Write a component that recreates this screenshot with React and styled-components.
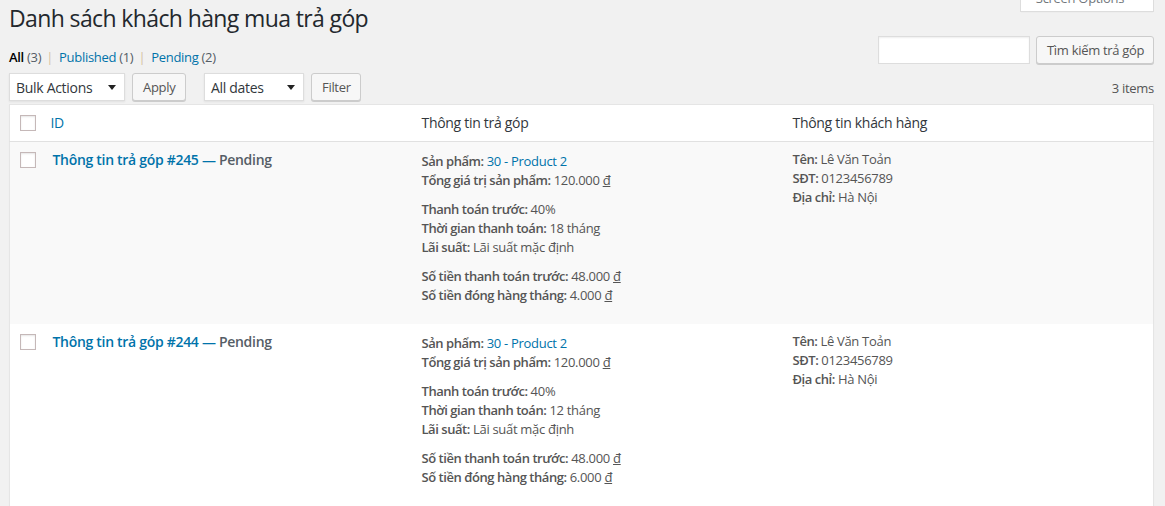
import React from "react";
import styled, { createGlobalStyle } from "styled-components";

const Global = createGlobalStyle`
  html, body { margin: 0; padding: 0; background: #f1f1f1; }
  body {
    font-family: "Open Sans", "Noto Sans", sans-serif;
    font-size: 13px;
    color: #444;
    letter-spacing: -0.3px;
    overflow: hidden;
  }
  * { box-sizing: border-box; }
`;

const Page = styled.div`
  position: relative;
  padding: 0 11px 0 9px;
  width: 1165px;
  height: 506px;
  overflow: hidden;
`;

const ScreenTab = styled.div`
  position: absolute;
  top: -16px;
  right: 11px;
  width: 134px;
  height: 28px;
  background: #fff;
  border: 1px solid #ddd;
  border-top: none;
  box-shadow: 0 1px 1px -1px rgba(0, 0, 0, 0.1);
  color: #72777c;
  font-size: 13px;
  line-height: 28px;
  display: flex;
  align-items: center;
  justify-content: center;
  gap: 6px;
`;

const Title = styled.h1`
  margin: 0;
  padding: 4px 0 0;
  font-size: 23px;
  font-weight: 400;
  line-height: 29px;
  letter-spacing: -0.62px;
  color: #23282d;
`;

const TopRow = styled.div`
  display: flex;
  justify-content: space-between;
  align-items: flex-start;
  height: 31px;
`;

const Subsub = styled.ul`
  list-style: none;
  margin: 15px 0 0;
  padding: 0;
  display: flex;
  line-height: 19px;
  font-size: 13px;
  color: #666;
`;

const SubItem = styled.li`
  display: flex;
  white-space: pre;
`;

const SubLink = styled.a`
  color: ${(p) => (p.$current ? "#000" : "#0073aa")};
  font-weight: ${(p) => (p.$current ? 600 : 400)};
  text-decoration: none;
`;

const Count = styled.span`
  color: #555d66;
  font-weight: 400;
`;

const Sep = styled.span`
  color: #d6c2a2;
  padding: 0 6px 0 5px;
`;

const SearchBox = styled.div`
  display: flex;
  gap: 6px;
  margin-top: 3px;
`;

const SearchInput = styled.div`
  width: 152px;
  height: 28px;
  background: #fff;
  border: 1px solid #ddd;
  box-shadow: inset 0 1px 2px rgba(0, 0, 0, 0.07);
`;

const Button = styled.button`
  height: 28px;
  padding: 0 10px 1px;
  margin: 0;
  font-family: inherit;
  font-size: 13px;
  letter-spacing: -0.3px;
  line-height: 26px;
  color: #555;
  background: #f7f7f7;
  border: 1px solid #ccc;
  border-radius: 3px;
  box-shadow: 0 1px 0 #ccc;
  white-space: nowrap;
  width: ${(p) => p.$w || "auto"};
`;

const TableNav = styled.div`
  display: flex;
  align-items: center;
  margin-top: 9px;
  height: 28px;
`;

const Actions = styled.div`
  display: flex;
  align-items: center;
  gap: 7px;
  margin-right: ${(p) => p.$mr || "0"};
`;

const Select = styled.div`
  width: ${(p) => p.$w};
  height: 28px;
  background: #fff;
  border: 1px solid #ddd;
  box-shadow: 0 1px 2px rgba(0, 0, 0, 0.07);
  color: #32373c;
  font-size: 14px;
  line-height: 26px;
  padding: 1px 8px 0 6px;
  display: flex;
  align-items: center;
  justify-content: space-between;
`;

const Items = styled.div`
  margin-left: auto;
  color: #555;
  font-size: 13px;
  padding-top: 1px;
`;

const Table = styled.table`
  margin-top: 3px;
  width: 1145px;
  border-collapse: collapse;
  border-spacing: 0;
  table-layout: fixed;
  background: #fff;
  border: 1px solid #e5e5e5;
  box-shadow: 0 1px 1px rgba(0, 0, 0, 0.04);
`;

const Th = styled.th`
  text-align: left;
  font-weight: 400;
  font-size: 14px;
  color: #32373c;
  line-height: 19px;
  padding: 8px 10px 9px;
  border-bottom: 1px solid #e1e1e1;
  vertical-align: middle;
`;

const HeadLink = styled.a`
  color: #0073aa;
  text-decoration: none;
`;

const Tr = styled.tr`
  background: ${(p) => (p.$alt ? "#f9f9f9" : "#fff")};
`;

const Td = styled.td`
  vertical-align: top;
  padding: ${(p) => p.$pad || "8px 10px"};
  color: #555;
  font-size: 13px;
  line-height: 19px;
`;

const CheckCell = styled.td`
  vertical-align: top;
  padding: 10px 0 0 10px;
`;

const CheckHead = styled.th`
  padding: 0 0 0 10px;
  vertical-align: middle;
  border-bottom: 1px solid #e1e1e1;
`;

const Checkbox = styled.span`
  display: block;
  width: 16px;
  height: 16px;
  background: #fff;
  border: 1px solid #c5b8b8;
  box-shadow: inset 0 1px 2px rgba(0, 0, 0, 0.1);
`;

const RowTitle = styled.a`
  display: block;
  margin-left: 2px;
  font-size: 14px;
  font-weight: 600;
  letter-spacing: -0.3px;
  color: #0073aa;
  text-decoration: none;
  line-height: 20px;
`;

const PostState = styled.span`
  color: #555d66;
`;

const Para = styled.p`
  margin: 0 0 10px;
`;

const Line = styled.div``;

const Label = styled.span`
  font-weight: 600;
  letter-spacing: -0.45px;
  color: #555;
`;

const ValueLink = styled.a`
  color: #0073aa;
  text-decoration: none;
`;

const Arrow = () => (
  <svg width="8" height="5" viewBox="0 0 8 5">
    <path d="M0 0 L8 0 L4 5 Z" fill="#222" />
  </svg>
);

const rows = [
  { id: 245, months: 18, monthly: "4.000", alt: true },
  { id: 244, months: 12, monthly: "6.000", alt: false },
];

export default function App() {
  return (
    <>
      <Global />
      <Page>
        <ScreenTab>
          Screen Options
          <svg width="8" height="5" viewBox="0 0 8 5">
            <path d="M0 0 L8 0 L4 5 Z" fill="#a0a5aa" />
          </svg>
        </ScreenTab>
        <Title>Danh sách khách hàng mua trả góp</Title>
        <TopRow>
          <Subsub>
            <SubItem>
              <SubLink $current>All</SubLink>
              <Count> (3)</Count>
              <Sep>|</Sep>
            </SubItem>
            <SubItem>
              <SubLink>Published <Count>(1)</Count></SubLink>
              <Sep>|</Sep>
            </SubItem>
            <SubItem>
              <SubLink>Pending <Count>(2)</Count></SubLink>
            </SubItem>
          </Subsub>
          <SearchBox>
            <SearchInput />
            <Button $w="118px">Tìm kiếm trả góp</Button>
          </SearchBox>
        </TopRow>
        <TableNav>
          <Actions $mr="18px">
            <Select $w="116px">
              Bulk Actions <Arrow />
            </Select>
            <Button $w="54px">Apply</Button>
          </Actions>
          <Actions>
            <Select $w="100px">
              All dates <Arrow />
            </Select>
            <Button $w="50px">Filter</Button>
          </Actions>
          <Items>3 items</Items>
        </TableNav>
        <Table>
          <colgroup>
            <col style={{ width: "31px" }} />
            <col />
            <col />
            <col />
          </colgroup>
          <thead>
            <tr>
              <CheckHead>
                <Checkbox />
              </CheckHead>
              <Th>
                <HeadLink>ID</HeadLink>
              </Th>
              <Th>Thông tin trả góp</Th>
              <Th>Thông tin khách hàng</Th>
            </tr>
          </thead>
          <tbody>
            {rows.map((r) => (
              <Tr key={r.id} $alt={r.alt}>
                <CheckCell>
                  <Checkbox />
                </CheckCell>
                <Td>
                  <RowTitle>
                    Thông tin trả góp #{r.id} — <PostState>Pending</PostState>
                  </RowTitle>
                </Td>
                <Td $pad="10px 10px 9px">
                  <Para>
                    <Line>
                      <Label>Sản phẩm:</Label> <ValueLink>30 - Product 2</ValueLink>
                    </Line>
                    <Line>
                      <Label>Tổng giá trị sản phẩm:</Label> 120.000 <u>đ</u>
                    </Line>
                  </Para>
                  <Para>
                    <Line>
                      <Label>Thanh toán trước:</Label> 40%
                    </Line>
                    <Line>
                      <Label>Thời gian thanh toán:</Label> {r.months} tháng
                    </Line>
                    <Line>
                      <Label>Lãi suất:</Label> Lãi suất mặc định
                    </Line>
                  </Para>
                  <Para>
                    <Line>
                      <Label>Số tiền thanh toán trước:</Label> 48.000 <u>đ</u>
                    </Line>
                    <Line>
                      <Label>Số tiền đóng hàng tháng:</Label> {r.monthly} <u>đ</u>
                    </Line>
                  </Para>
                </Td>
                <Td>
                  <Line>
                    <Label>Tên:</Label> Lê Văn Toản
                  </Line>
                  <Line>
                    <Label>SĐT:</Label> 0123456789
                  </Line>
                  <Line>
                    <Label>Địa chỉ:</Label> Hà Nội
                  </Line>
                </Td>
              </Tr>
            ))}
          </tbody>
        </Table>
      </Page>
    </>
  );
}
